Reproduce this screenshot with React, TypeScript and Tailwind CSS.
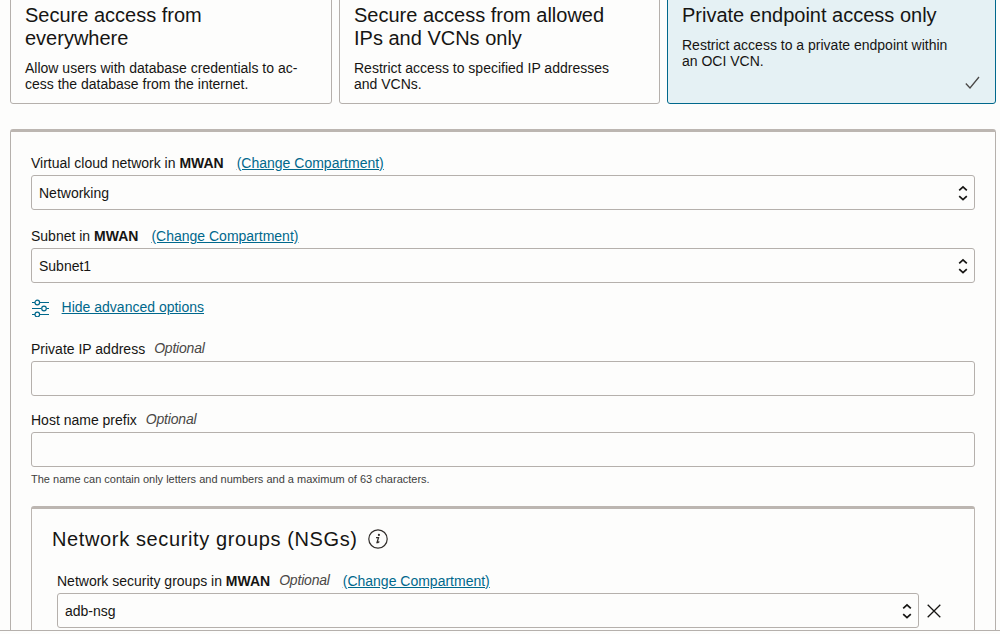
import type { ReactNode } from "react";

function AccessCard({ title, children, className }: { title: ReactNode; children: ReactNode; className: string }) {
  return (
    <div className={`relative h-[108px] rounded-[3px] border pl-[14px] pt-[7px] ${className}`}>
      <h3 className="text-[20px] leading-[23px]">{title}</h3>
      <p className="mt-[10px] text-[14px] leading-4">{children}</p>
    </div>
  );
}

function Chevrons() {
  return (
    <svg width="10" height="16" viewBox="0 0 10 16" fill="none" stroke="#161513" strokeWidth="1.7">
      <path d="M1.2 5.4 5 1.9l3.8 3.5M1.2 11.2 5 14.7l3.8-3.5" />
    </svg>
  );
}

function Select({ value }: { value: string }) {
  return (
    <div className="flex h-[35px] flex-1 items-center justify-between rounded-[3px] border border-[#b5b0ac] pl-[7px] pr-[6px]">
      <span className="leading-4">{value}</span>
      <Chevrons />
    </div>
  );
}

function ChangeLink() {
  return (
    <a href="#" className="ml-[13px] text-[#00688c] underline">
      (Change Compartment)
    </a>
  );
}

function Optional() {
  return <em className="relative -top-px ml-[9px] tracking-[-0.2px] text-[#4a4846]">Optional</em>;
}

export default function App() {
  return (
    <div className="h-[634px] w-[1000px] overflow-hidden bg-[#fdfdfc] font-['Liberation_Sans',Arial,sans-serif] text-[14px] leading-4 text-[#161513]">
      <div className="h-[631px] overflow-hidden border-b border-[#b5b0ac]">
        <div className="-mt-1 ml-[10px] flex">
          <AccessCard className="w-[322px] border-[#b5b0ac]" title={<>Secure access from<br />everywhere</>}>
            Allow users with database credentials to ac-<br />cess the database from the internet.
          </AccessCard>
          <AccessCard className="ml-[7px] w-[321px] border-[#b5b0ac]" title={<>Secure access from allowed<br />IPs and VCNs only</>}>
            Restrict access to specified IP addresses<br />and VCNs.
          </AccessCard>
          <AccessCard className="ml-[7px] w-[329px] border-[#00688c] bg-[#e5f1f4]" title="Private endpoint access only">
            Restrict access to a private endpoint within<br />an OCI VCN.
            <svg className="absolute bottom-[13px] right-[15px]" width="15" height="14" viewBox="0 0 15 14" fill="none" stroke="#4a4846" strokeWidth="1.3">
              <path d="M.8 7.5 5 12 14 1" />
            </svg>
          </AccessCard>
        </div>

        <section className="ml-[10px] mt-[25px] h-[520px] w-[986px] rounded-[3px] border border-t-[3px] border-[#b5b0ac] border-t-[#bcb6b1] px-5 pt-[23px]">
          <div className="flex">
            <span>Virtual cloud network in <b>MWAN</b></span>
            <ChangeLink />
          </div>
          <div className="mt-1 flex"><Select value="Networking" /></div>

          <div className="mt-[18px] flex">
            <span>Subnet in <b>MWAN</b></span>
            <ChangeLink />
          </div>
          <div className="mt-1 flex"><Select value="Subnet1" /></div>

          <div className="mt-4 flex h-4">
            <svg width="19" height="18" viewBox="0 0 19 18" fill="none" stroke="#00688c" strokeWidth="1.2">
              <path d="M1 3.5h3M9 3.5h9M1 9.5h9M15.5 9.5H18M1 15.5h3M9 15.5h9" />
              <circle cx="6.3" cy="3.5" r="2.3" />
              <circle cx="13" cy="9.5" r="2.3" />
              <circle cx="6.3" cy="15.5" r="2.3" />
            </svg>
            <a href="#" className="ml-[11.6px] text-[#00688c] underline">Hide advanced options</a>
          </div>

          <div className="mt-[26px] flex h-4">
            <span>Private IP address</span>
            <Optional />
          </div>
          <div className="mt-1 h-[35px] rounded-[3px] border border-[#b5b0ac]" />

          <div className="mt-4 flex h-4">
            <span>Host name prefix</span>
            <Optional />
          </div>
          <div className="mt-1 h-[35px] rounded-[3px] border border-[#b5b0ac]" />
          <p className="mt-[5px] text-[11px] leading-[14px] text-[#403e3c]">
            The name can contain only letters and numbers and a maximum of 63 characters.
          </p>

          <section className="mt-5 h-[150px] rounded-[3px] border border-t-[3px] border-[#bcb6b1] pl-[20px] pt-[18px]">
            <div className="flex items-center">
              <h2 className="text-[20px] leading-6 tracking-[0.63px]">Network security groups (NSGs)</h2>
              <svg className="ml-[10px]" width="20" height="20" viewBox="0 0 20 20" fill="none">
                <circle cx="10" cy="10" r="9.2" stroke="#312d2a" strokeWidth="1.2" />
                <circle cx="10.9" cy="5.9" r="1.1" fill="#312d2a" />
                <path d="M8 8.6h2.5L9 13.7h.9l1.4-1.2" stroke="#312d2a" strokeWidth="1.3" />
              </svg>
            </div>
            <div className="ml-[5px] mt-[22px] flex">
              <span>Network security groups in <b>MWAN</b></span>
              <Optional />
              <ChangeLink />
            </div>
            <div className="ml-[5px] mt-1 flex items-center pr-[33px]">
              <Select value="adb-nsg" />
              <svg className="ml-2" width="14" height="14" viewBox="0 0 14 14" fill="none" stroke="#161513" strokeWidth="1.3">
                <path d="m.7.7 12.6 12.6M13.3.7.7 13.3" />
              </svg>
            </div>
          </section>
        </section>
      </div>
    </div>
  );
}
